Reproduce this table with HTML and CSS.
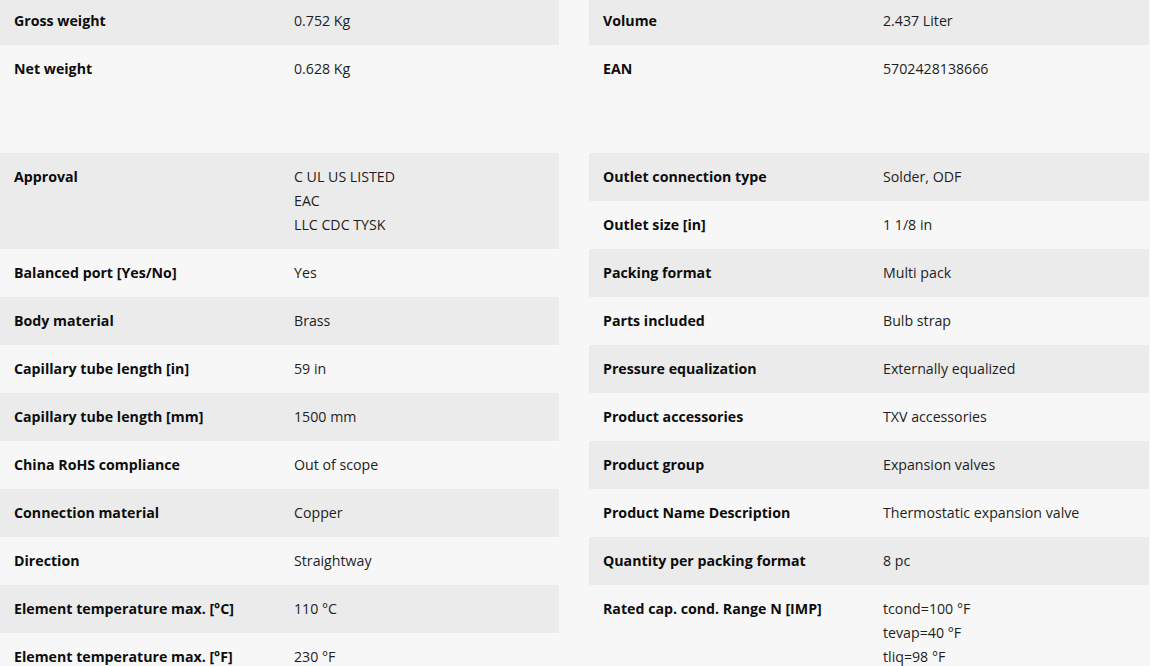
FILE: index.html
```html
<!DOCTYPE html>
<html>
<head>
<meta charset="utf-8">
<link rel="stylesheet" href="styles.css">
</head>
<body>
<div class="page">
  <section class="group">
    <div class="table">
      <div class="row"><div class="label">Gross weight</div><div class="value">0.752 Kg</div></div>
      <div class="row"><div class="label">Net weight</div><div class="value">0.628 Kg</div></div>
    </div>
    <div class="table">
      <div class="row"><div class="label">Volume</div><div class="value">2.437 Liter</div></div>
      <div class="row"><div class="label">EAN</div><div class="value">5702428138666</div></div>
    </div>
  </section>
  <section class="group">
    <div class="table">
      <div class="row"><div class="label">Approval</div><div class="value">C UL US LISTED<br>EAC<br>LLC CDC TYSK</div></div>
      <div class="row"><div class="label">Balanced port [Yes/No]</div><div class="value">Yes</div></div>
      <div class="row"><div class="label">Body material</div><div class="value">Brass</div></div>
      <div class="row"><div class="label">Capillary tube length [in]</div><div class="value">59 in</div></div>
      <div class="row"><div class="label">Capillary tube length [mm]</div><div class="value">1500 mm</div></div>
      <div class="row"><div class="label">China RoHS compliance</div><div class="value">Out of scope</div></div>
      <div class="row"><div class="label">Connection material</div><div class="value">Copper</div></div>
      <div class="row"><div class="label">Direction</div><div class="value">Straightway</div></div>
      <div class="row"><div class="label">Element temperature max. [°C]</div><div class="value">110 °C</div></div>
      <div class="row"><div class="label">Element temperature max. [°F]</div><div class="value">230 °F</div></div>
    </div>
    <div class="table">
      <div class="row"><div class="label">Outlet connection type</div><div class="value">Solder, ODF</div></div>
      <div class="row"><div class="label">Outlet size [in]</div><div class="value">1 1/8 in</div></div>
      <div class="row"><div class="label">Packing format</div><div class="value">Multi pack</div></div>
      <div class="row"><div class="label">Parts included</div><div class="value">Bulb strap</div></div>
      <div class="row"><div class="label">Pressure equalization</div><div class="value">Externally equalized</div></div>
      <div class="row"><div class="label">Product accessories</div><div class="value">TXV accessories</div></div>
      <div class="row"><div class="label">Product group</div><div class="value">Expansion valves</div></div>
      <div class="row"><div class="label">Product Name Description</div><div class="value">Thermostatic expansion valve</div></div>
      <div class="row"><div class="label">Quantity per packing format</div><div class="value">8 pc</div></div>
      <div class="row"><div class="label">Rated cap. cond. Range N [IMP]</div><div class="value">tcond=100 °F<br>tevap=40 °F<br>tliq=98 °F</div></div>
    </div>
  </section>
</div>
</body>
</html>
```

FILE: styles.css
```css
html, body {
  margin: 0;
  padding: 0;
  background: #f7f7f7;
}
body {
  font-family: "Open Sans", "Noto Sans", sans-serif;
  font-size: 14.2px;
  color: #1a1a1a;
  overflow: hidden;
}
.page {
  width: 1149px;
  margin-top: -3px;
  display: flex;
  flex-direction: column;
  gap: 60px;
}
.group {
  display: grid;
  grid-template-columns: 559px 560px;
  column-gap: 30px;
  align-items: start;
}
.table {
  display: flex;
  flex-direction: column;
}
.row {
  display: grid;
  grid-template-columns: 280px 1fr;
  padding: 12px 14px;
  line-height: 24px;
}
.row:nth-child(odd) {
  background: #ebebeb;
}
.label {
  font-weight: 700;
  color: #0d0d0d;
}
.value {
  color: #1e1e1e;
}
```
